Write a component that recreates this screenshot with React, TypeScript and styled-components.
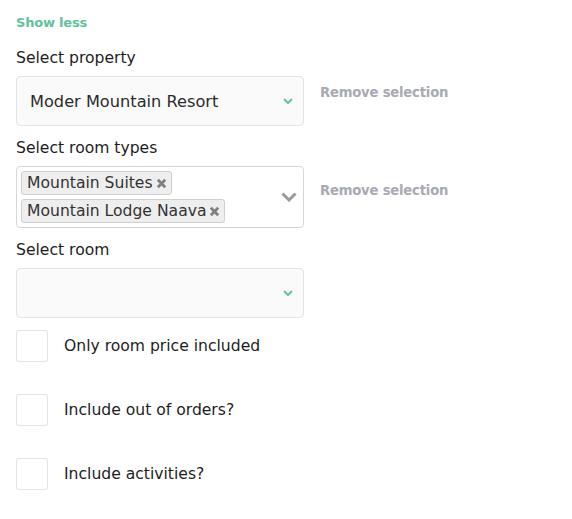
import React from 'react'
import styled, { createGlobalStyle } from 'styled-components'

const GlobalStyle = createGlobalStyle`
    body {
        margin: 0;
        background: #fff;
        font-family: "DejaVu Sans", "Liberation Sans", sans-serif;
        color: #222;
    }
`

const Wrapper = styled.div`
    padding: 12px 16px 0 16px;
    width: 540px;
    > .toggle {
        display: inline-block;
        color: #5fc29d;
        font-size: 13px;
        font-weight: 700;
        height: 20px;
        line-height: 20px;
        letter-spacing: -0.2px;
    }
`

const Field = styled.div`
    margin-top: 12px;
    &:first-of-type {
        margin-top: 15px;
    }
    > label {
        display: block;
        font-size: 15.6px;
        line-height: 20px;
        margin-bottom: 8px;
        color: #1d1d1d;
    }
`

const Row = styled.div`
    display: flex;
    align-items: flex-start;
`

const Remove = styled.span<{ offset: number }>`
    margin-left: 16px;
    margin-top: ${p => p.offset}px;
    font-size: 13.2px;
    line-height: 16px;
    font-weight: 700;
    color: #a8aab2;
    letter-spacing: -0.2px;
`

const SelectBox = styled.div<{ multi?: boolean }>`
    width: 288px;
    box-sizing: border-box;
    min-height: ${p => (p.multi ? '62px' : '50px')};
    border: 1px solid ${p => (p.multi ? '#d6d6d6' : '#e3e3e3')};
    border-radius: 4px;
    background: ${p => (p.multi ? '#fff' : '#fafafa')};
    display: flex;
    align-items: center;
    padding: ${p => (p.multi ? '4px 6px 4px 4px' : '0 10px 0 13px')};
    > .value {
        flex: 1;
        font-size: 16.2px;
        color: #2b2b2b;
    }
    > .tags {
        flex: 1;
        display: flex;
        flex-direction: column;
        align-items: flex-start;
        gap: 4px;
    }
`

const Tag = styled.span`
    display: inline-flex;
    align-items: center;
    height: 24px;
    box-sizing: border-box;
    padding: 0 4px 0 5px;
    background: #eeeeee;
    border: 1px solid #cfcfcf;
    border-radius: 3px;
    font-size: 15.6px;
    color: #333;
    > svg {
        margin-left: 3px;
    }
`

const CheckRow = styled.div`
    display: flex;
    align-items: center;
    height: 32px;
    margin-top: 32px;
    &:first-of-type {
        margin-top: 12px;
    }
    > .box {
        width: 32px;
        height: 32px;
        box-sizing: border-box;
        border: 1px solid #e4e4e8;
        border-radius: 2px;
        background: #fff;
    }
    > span {
        margin-left: 16px;
        font-size: 15.6px;
        color: #1d1d1d;
        margin-top: -1px;
    }
`

function SmallChevron() {
    return (
        <svg width="10" height="6" viewBox="0 0 10 6">
            <path d="M1 1 L5 5 L9 1" fill="none" stroke="#5fc29d" strokeWidth="2" />
        </svg>
    )
}

function BigChevron() {
    return (
        <svg width="16" height="10" viewBox="0 0 16 10">
            <path d="M1.5 1.5 L8 8 L14.5 1.5" fill="none" stroke="#9a9a9a" strokeWidth="3" />
        </svg>
    )
}

function Cross() {
    return (
        <svg width="11" height="11" viewBox="0 0 11 11">
            <path d="M1.8 1.8 L9.2 9.2 M9.2 1.8 L1.8 9.2" fill="none" stroke="#7f7f7f" strokeWidth="2.8" />
        </svg>
    )
}

function Checks() {
    const items = ['Only room price included', 'Include out of orders?', 'Include activities?']
    return (
        <div>
            {items.map(t => (
                <CheckRow key={t}>
                    <div className="box" />
                    <span>{t}</span>
                </CheckRow>
            ))}
        </div>
    )
}

export default function App() {
    return (<Wrapper>
        <GlobalStyle />
        <span className="toggle">Show less</span>
        <Field>
            <label>Select property</label>
            <Row>
                <SelectBox>
                    <span className="value">Moder Mountain Resort</span>
                    <SmallChevron />
                </SelectBox>
                <Remove offset={9}>Remove selection</Remove>
            </Row>
        </Field>
        <Field>
            <label>Select room types</label>
            <Row>
                <SelectBox multi>
                    <div className="tags">
                        <Tag>Mountain Suites<Cross /></Tag>
                        <Tag>Mountain Lodge Naava<Cross /></Tag>
                    </div>
                    <BigChevron />
                </SelectBox>
                <Remove offset={17}>Remove selection</Remove>
            </Row>
        </Field>
        <Field>
            <label>Select room</label>
            <SelectBox>
                <span className="value"></span>
                <SmallChevron />
            </SelectBox>
        </Field>
        <Checks />
    </Wrapper>)
}
